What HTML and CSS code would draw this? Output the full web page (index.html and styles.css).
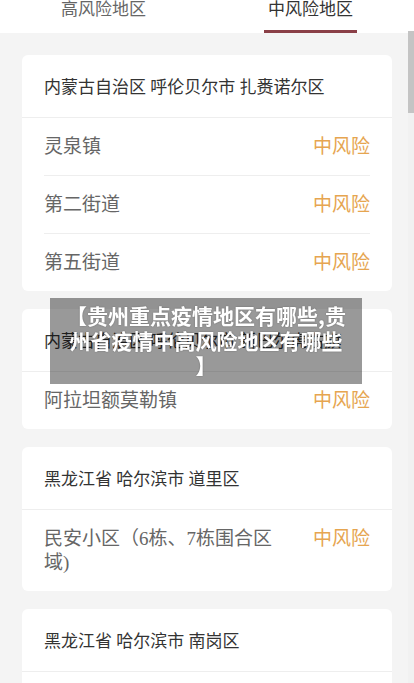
FILE: index.html
```html
<!DOCTYPE html>
<html lang="zh-CN">
<head>
    <meta charset="UTF-8">
    <meta name="viewport" content="width=device-width, initial-scale=1.0">
    <title>中高风险地区</title>
    <link rel="stylesheet" href="styles.css">
</head>
<body>
    <!-- Tabs -->
    <div class="tabs">
        <div class="tab"><span>高风险地区</span></div>
        <div class="tab active"><span>中风险地区</span></div>
    </div>

    <div class="list" id="area-list">
        <!-- Cards will be dynamically inserted here -->
    </div>

    <!-- Thin scrollbar drawn over the list -->
    <div class="scrollbar"><div class="thumb" id="thumb"></div></div>

    <div class="banner">【贵州重点疫情地区有哪些,贵<br>州省疫情中高风险地区有哪些<br>】</div>

    <script src="script.js"></script>
</body>
</html>
```

FILE: styles.css
```css
body {
    margin: 0;
    padding: 0;
    font-family: "Liberation Serif", "Noto Sans CJK SC", serif;
    background-color: #f4f4f4;
    overflow: hidden;
}

.tabs {
    display: flex;
    height: 33px;
    background: #fff;
    font-family: "Noto Sans CJK SC", sans-serif;
}
.tab {
    flex: 1;
    display: flex;
    justify-content: center;
}
.tab span {
    display: block;
    box-sizing: border-box;
    height: 33px;
    padding: 0 4px;
    font-size: 17px;
    line-height: 15px;
    color: #666;
}
.tab.active span {
    color: #333;
    border-bottom: 3px solid #8a3f47;
}

.list {
    height: calc(100vh - 33px);
    box-sizing: border-box;
    overflow-y: scroll;
    scrollbar-width: none;
    padding: 22px 22px 0 22px;
}
.list::-webkit-scrollbar {
    display: none;
}

.scrollbar {
    position: fixed;
    top: 31px;
    right: 0;
    bottom: 0;
    width: 6px;
    background: #f1f1f1;
}
.scrollbar .thumb {
    height: 81px;
    background: #c4c4c4;
}

.card {
    background: #fff;
    border-radius: 6px;
    margin-bottom: 18px;
}
.card-head {
    padding: 21px 22px 17px;
    font-size: 17px;
    line-height: 24px;
    color: #333;
    border-bottom: 1px solid #eee;
}
.row {
    display: flex;
    margin: 0 22px;
    padding: 17px 0 16px;
    font-size: 19px;
    line-height: 24px;
    border-bottom: 1px solid #eee;
}
.row:last-child {
    border-bottom: none;
}
.row .name {
    flex: 1;
    padding-right: 30px;
    color: #666;
}
.row .level {
    color: #e6a550;
}

/* title overlay */
.banner {
    position: fixed;
    top: 298px;
    left: 50px;
    width: 312px;
    box-sizing: border-box;
    padding: 5px 0 6px;
    background: rgba(0, 0, 0, 0.4);
    color: #fff;
    font-family: "Noto Sans CJK SC", sans-serif;
    font-weight: bold;
    font-size: 21px;
    line-height: 25px;
    text-align: center;
    text-shadow: 0 0 2px rgba(0, 0, 0, 0.3);
}
```

FILE: script.js
```js
const areas = [
    { region: '内蒙古自治区 呼伦贝尔市 扎赉诺尔区', places: ['灵泉镇', '第二街道', '第五街道'] },
    { region: '内蒙古自治区 呼伦贝尔市 新巴尔虎右旗', places: ['阿拉坦额莫勒镇'] },
    { region: '黑龙江省 哈尔滨市 道里区', places: ['民安小区（6栋、7栋围合区域)'] },
    { region: '黑龙江省 哈尔滨市 南岗区', places: ['宣化街道文化社区', '曲线街道宏伟社区', '先锋路街道红旗小区', '和兴路街道学府小区', '花园街道铁路小区', '保健路街道康乐小区', '哈西街道万达小区', '王岗镇新发村', '大成街道桥南小区', '荣市街道福顺小区', '七政街道红军小区', '通达街道民益小区'] },
    { region: '黑龙江省 哈尔滨市 香坊区', places: ['和平路街道和平小区', '红旗街道幸福小区', '通天街道民生小区', '黎明街道新香坊小区', '大庆路街道华夏小区', '建筑街道和谐家园', '向阳镇向阳村', '幸福镇新村'] },
    { region: '黑龙江省 哈尔滨市 松北区', places: ['松浦街道世茂小区', '万宝街道万宝社区', '太阳岛街道太阳岛小区', '利民街道学院路小区', '对青山镇河南村', '乐业镇乐业村', '松北街道恒大小区', '船口街道船口村'] },
    { region: '贵州省 贵阳市 南明区', places: ['花果园街道花果园小区', '遵义路街道中华南路社区', '油榨街街道新华路社区', '太慈桥街道太慈社区', '二戈街道二戈寨社区', '中曹司街道中曹社区', '后巢乡后巢村', '云关乡云关村'] },
    { region: '贵州省 贵阳市 云岩区', places: ['中华中路街道中华社区', '延安中路街道延安社区', '宅吉街道宅吉社区', '黔灵镇茶店村', '三桥街道三桥社区', '头桥街道头桥社区', '市西街道市西社区', '金鸭街道金鸭社区'] },
    { region: '贵州省 贵阳市 观山湖区', places: ['金华园街道世纪城社区', '宾阳街道碧海社区', '世纪城街道龙耀社区', '朱昌镇朱昌村', '金阳街道金阳社区', '观山街道观山社区', '长岭街道长岭社区', '百花湖镇百花村'] },
    { region: '贵州省 遵义市 汇川区', places: ['上海路街道上海社区', '洗马路街道洗马社区', '大连路街道大连社区', '高坪街道高坪社区', '董公寺街道董公社区', '高桥街道高桥社区', '泗渡镇泗渡村', '沙湾镇沙湾村'] },
    { region: '贵州省 黔南州 都匀市', places: ['广惠路街道广惠社区', '文峰街道文峰社区', '小围寨街道小围社区', '沙包堡街道沙包社区', '绿茵湖街道绿茵社区', '墨冲镇墨冲村', '平浪镇平浪村', '毛尖镇毛尖村'] }
];

function renderAreas() {
    const list = document.getElementById('area-list');
    list.innerHTML = '';

    areas.forEach(area => {
        const card = document.createElement('div');
        card.className = 'card';

        let rows = '';
        area.places.forEach(place => {
            rows += `
                <div class="row">
                    <div class="name">${place}</div>
                    <div class="level">中风险</div>
                </div>`;
        });

        card.innerHTML = `<div class="card-head">${area.region}</div>${rows}`;
        list.appendChild(card);
    });
}

// Keep the drawn scrollbar thumb in step with the list
function updateThumb() {
    const list = document.getElementById('area-list');
    const thumb = document.getElementById('thumb');
    const track = thumb.parentElement.clientHeight;
    const size = Math.max(30, track * list.clientHeight / list.scrollHeight);
    const top = (track - size) * list.scrollTop / (list.scrollHeight - list.clientHeight || 1);
    thumb.style.height = size + 'px';
    thumb.style.transform = `translateY(${top}px)`;
}

renderAreas();
updateThumb();
document.getElementById('area-list').addEventListener('scroll', updateThumb);
```
